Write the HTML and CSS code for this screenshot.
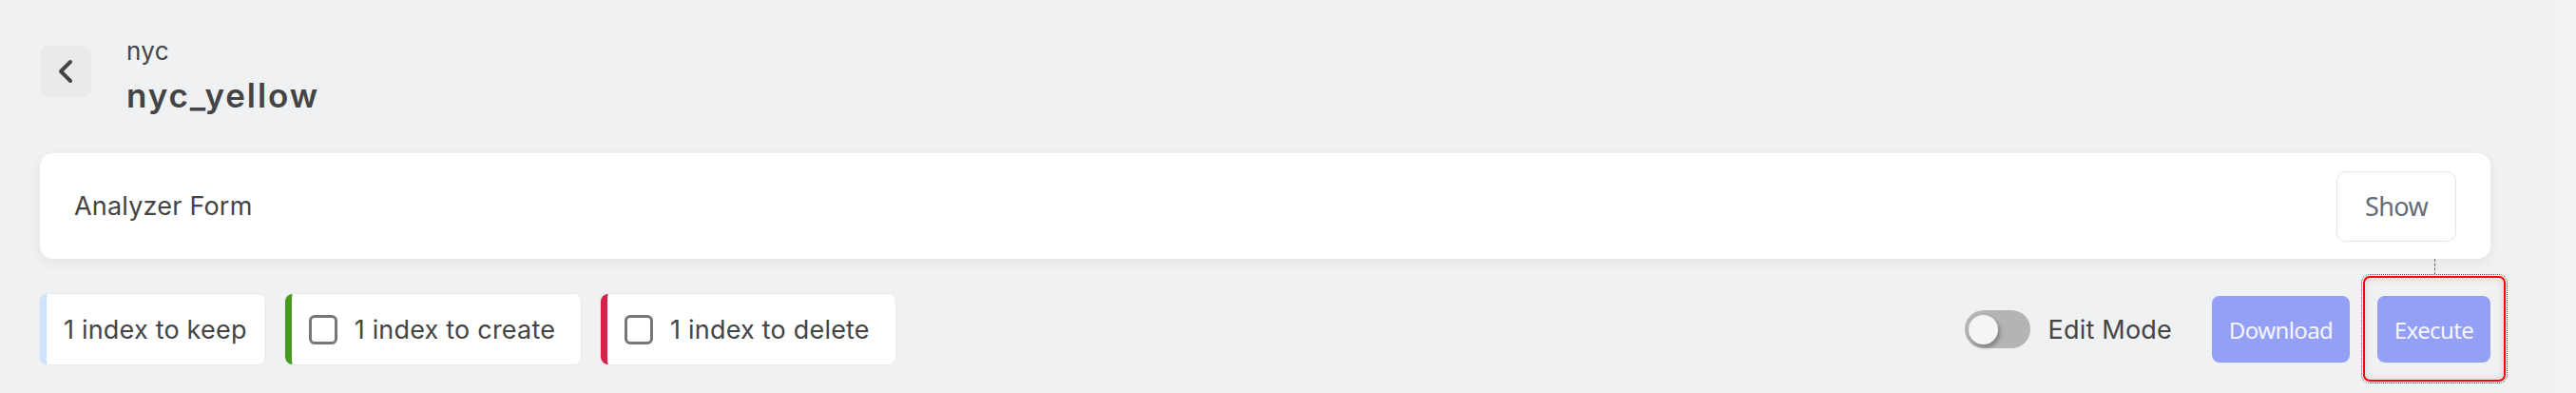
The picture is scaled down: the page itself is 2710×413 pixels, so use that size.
FILE: index.html
```html
<!DOCTYPE html>
<html lang="en">
<head>
<meta charset="utf-8">
<title>nyc_yellow</title>
<link rel="stylesheet" href="styles.css">
</head>
<body>
<div class="layout">
  <main class="page">
    <header class="header">
      <button class="back" aria-label="Back">
        <svg width="20" height="28" viewBox="0 0 20 28"><path d="M15 4 L5 14 L15 24" fill="none" stroke="#444" stroke-width="4" stroke-linecap="round" stroke-linejoin="round"/></svg>
      </button>
      <div class="titles">
        <div class="parent">nyc</div>
        <h1 class="name">nyc_yellow</h1>
      </div>
    </header>

    <section class="card">
      <div class="card-title">Analyzer Form</div>
      <button class="show-btn">Show</button>
    </section>

    <div class="toolbar">
      <div class="chips">
        <div class="chip chip-keep"><span class="chip-text">1 index to keep</span></div>
        <label class="chip chip-create"><span class="box"></span><span class="chip-text">1 index to create</span></label>
        <label class="chip chip-delete"><span class="box"></span><span class="chip-text">1 index to delete</span></label>
      </div>
      <div class="actions">
        <span class="toggle"><span class="knob"></span></span>
        <span class="edit-label">Edit Mode</span>
        <button class="btn btn-download">Download</button>
        <span class="exec-wrap">
          <button class="btn btn-execute">Execute</button>
          <span class="highlight"><span class="connector"></span></span>
        </span>
      </div>
    </div>
  </main>
  <div class="scroll-strip"></div>
</div>
</body>
</html>
```

FILE: styles.css
```css
* { box-sizing: border-box; }

html, body {
  margin: 0;
  height: 100%;
}

body {
  background: #f0f1f3;
  font-family: Inter, "Noto Sans", sans-serif;
  color: #444;
}

.layout {
  display: flex;
  min-height: 413px;
}

.page {
  flex: 1;
  padding: 38px 70px 0 42px;
}

.scroll-strip {
  width: 20px;
  background: #f2f2f2;
}

/* header */
.header {
  display: flex;
  align-items: flex-start;
  gap: 37px;
}

.back {
  margin-top: 10px;
  width: 54px;
  height: 54px;
  border: none;
  border-radius: 9px;
  background: #eaeaea;
  display: flex;
  align-items: center;
  justify-content: center;
  padding: 0;
}

.titles {
  display: flex;
  flex-direction: column;
}

.parent {
  font-size: 26px;
  line-height: 32px;
  color: #444;
  letter-spacing: 0.3px;
}

.name {
  margin: 9px 0 0;
  font-size: 35px;
  line-height: 42px;
  font-weight: 600;
  color: #444;
  letter-spacing: 1.9px;
}

/* card */
.card {
  margin-top: 40px;
  height: 111px;
  background: #fff;
  border-radius: 14px;
  box-shadow: 0 4px 14px rgba(0, 0, 0, 0.06);
  display: flex;
  align-items: center;
  justify-content: space-between;
  padding: 0 36px;
}

.card-title {
  font-size: 27px;
  color: #444;
  letter-spacing: 0.2px;
}

.show-btn {
  width: 126px;
  height: 74px;
  background: #fff;
  border: 1px solid #e4e4e6;
  border-radius: 10px;
  font-family: "Noto Sans", sans-serif;
  font-size: 27px;
  color: #646b78;
  letter-spacing: -0.6px;
  padding: 0;
}

/* toolbar */
.toolbar {
  margin-top: 37px;
  display: flex;
  align-items: center;
  justify-content: space-between;
}

.chips {
  display: flex;
  gap: 21px;
}

.chip {
  height: 74px;
  background: #fff;
  border-radius: 8px;
  border-left: 7px solid #cfe2ff;
  box-shadow: 0 0 0 1px rgba(0, 0, 0, 0.03);
  display: flex;
  align-items: center;
  gap: 18px;
  padding: 0 27px 0 18px;
}

.chip-keep { border-left-color: #cfe2ff; padding-right: 19px; }
.chip-create { border-left-color: #48991f; }
.chip-delete { border-left-color: #d6214b; }

.chip-text {
  font-size: 27px;
  color: #444;
  letter-spacing: 0.2px;
  white-space: nowrap;
}

.box {
  width: 30px;
  height: 31px;
  border: 3px solid #767676;
  border-radius: 6px;
  background: #fff;
}

.actions {
  display: flex;
  align-items: center;
}

.toggle {
  width: 69px;
  height: 40px;
  border-radius: 20px;
  background: #b4b4b4;
  display: flex;
  align-items: center;
  padding: 0 4px;
}

.knob {
  width: 31px;
  height: 31px;
  border-radius: 50%;
  background: #f5f5f5;
  box-shadow: 2px 3px 4px rgba(0, 0, 0, 0.3);
}

.edit-label {
  margin-left: 19px;
  font-size: 27px;
  color: #444;
  letter-spacing: 0.2px;
}

.btn {
  height: 70px;
  border: none;
  border-radius: 8px;
  background: #94a0f6;
  color: #f5f6ff;
  font-family: "Noto Sans", sans-serif;
  font-size: 24px;
  letter-spacing: -0.6px;
}

.btn-download {
  margin-left: 42px;
  width: 145px;
}

.exec-wrap {
  position: relative;
  margin-left: 29px;
  display: flex;
}

.btn-execute {
  width: 119px;
}

.highlight {
  position: absolute;
  left: -15px;
  right: -16px;
  top: -21px;
  bottom: -20px;
  border: 2px solid #ff0000;
  border-radius: 7px;
  outline: 1px dotted #555;
  outline-offset: 1px;
  box-shadow: inset 0 0 8px rgba(0, 0, 0, 0.12);
}

.connector {
  position: absolute;
  left: 73px;
  top: -20px;
  height: 17px;
  border-left: 1px dashed #666;
}
```
